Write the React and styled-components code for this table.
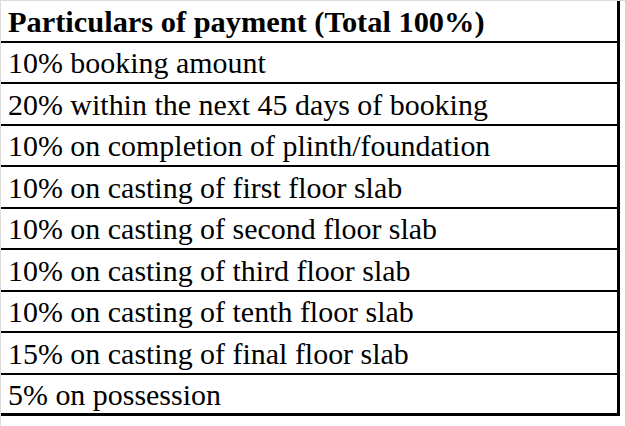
import React from "react";
import styled, { createGlobalStyle } from "styled-components";

const Global = createGlobalStyle`
  html, body { margin: 0; padding: 0; background: #fff; }
  body { font-family: "Liberation Serif", "Times New Roman", serif; color: #000; }
`;

const Frame = styled.div`
  width: 625px;
  height: 426px;
  box-sizing: border-box;
  border-top: 1px solid #dcdcdc;
  border-left: 1px solid #dcdcdc;
  background: #fff;
`;

const Table = styled.div`
  width: 619px;
  box-sizing: border-box;
  border-right: 3px solid #000;
  display: flex;
  flex-direction: column;
`;

const Row = styled.div`
  height: 41.5px;
  box-sizing: border-box;
  border-bottom: ${(p) => (p.$last ? "3px" : "2px")} solid #000;
  display: flex;
  align-items: center;
  padding: 3px 0 0 7px;
  font-size: 29.5px;
  line-height: 1;
  font-weight: ${(p) => (p.$head ? 700 : 400)};
  white-space: nowrap;
`;

const Text = styled.span`
  display: inline-block;
  transform: scaleX(${(p) => (p.$head ? 1.03 : 1.015)});
  transform-origin: left center;
`;

const rows = [
  "10% booking amount",
  "20% within the next 45 days of booking",
  "10% on completion of plinth/foundation",
  "10% on casting of first floor slab",
  "10% on casting of second floor slab",
  "10% on casting of third floor slab",
  "10% on casting of tenth floor slab",
  "15% on casting of final floor slab",
  "5% on possession",
];

export default function App() {
  return (
    <>
      <Global />
      <Frame>
        <Table>
          <Row $head>
            <Text $head>Particulars of payment (Total 100%)</Text>
          </Row>
          {rows.map((r, i) => (
            <Row key={i} $last={i === rows.length - 1}>
              <Text>{r}</Text>
            </Row>
          ))}
        </Table>
      </Frame>
    </>
  );
}
